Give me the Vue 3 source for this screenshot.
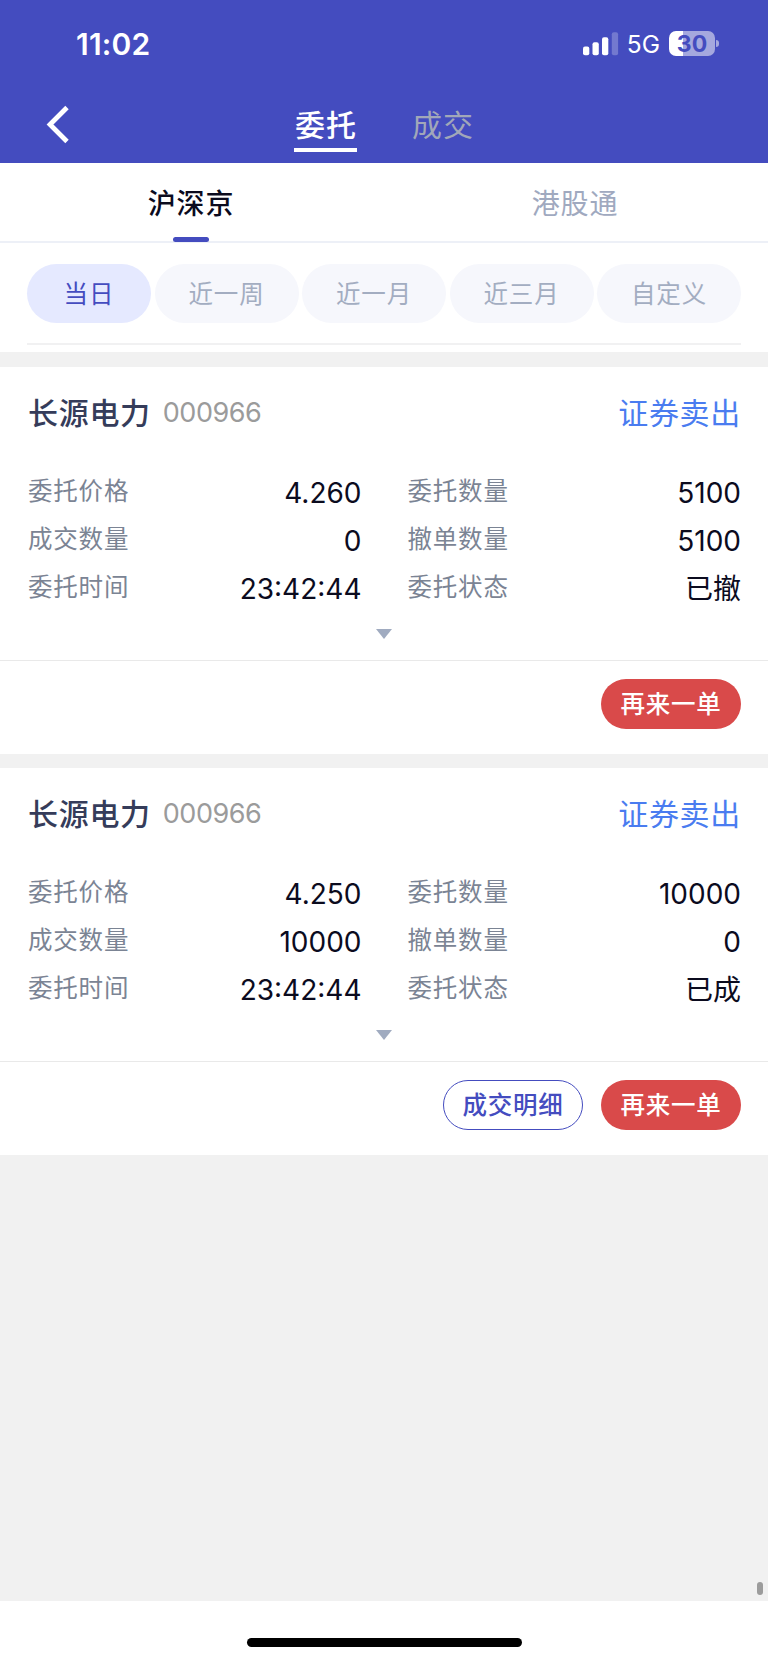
<script setup>
import { ref } from 'vue'

const pageTab = ref('委托')
const pageTabs = ['委托', '成交']

const market = ref('沪深京')
const markets = ['沪深京', '港股通']

const range = ref('当日')
const ranges = ['当日', '近一周', '近一月', '近三月', '自定义']

const orders = [
  {
    id: 1,
    name: '长源电力',
    code: '000966',
    type: '证券卖出',
    fields: [
      { label: '委托价格', value: '4.260' },
      { label: '委托数量', value: '5100' },
      { label: '成交数量', value: '0' },
      { label: '撤单数量', value: '5100' },
      { label: '委托时间', value: '23:42:44' },
      { label: '委托状态', value: '已撤' }
    ],
    hasDetail: false
  },
  {
    id: 2,
    name: '长源电力',
    code: '000966',
    type: '证券卖出',
    fields: [
      { label: '委托价格', value: '4.250' },
      { label: '委托数量', value: '10000' },
      { label: '成交数量', value: '10000' },
      { label: '撤单数量', value: '0' },
      { label: '委托时间', value: '23:42:44' },
      { label: '委托状态', value: '已成' }
    ],
    hasDetail: true
  }
]
</script>

<template>
  <div class="page">
    <header class="header">
      <div class="status">
        <span class="time">11:02</span>
        <div class="status-right">
          <svg class="signal" width="36" height="24" viewBox="0 0 36 24">
            <rect x="0" y="14.5" width="6.3" height="8.7" rx="2" fill="#fff" />
            <rect x="9.5" y="10.3" width="6.3" height="12.9" rx="2" fill="#fff" />
            <rect x="19" y="5.3" width="6.3" height="17.9" rx="2" fill="#fff" />
            <rect x="28.8" y="0.3" width="6.3" height="22.9" rx="2" fill="#fff" opacity="0.25" />
          </svg>
          <span class="network">5G</span>
          <div class="battery">
            <span class="battery-body">30</span>
            <span class="battery-tip"></span>
          </div>
        </div>
      </div>
      <nav class="nav">
        <svg class="back" width="24" height="40" viewBox="0 0 24 40">
          <path d="M21 2.5 L4 19.5 L21 36.5" fill="none" stroke="#fff" stroke-width="4.8" />
        </svg>
        <div class="page-tabs">
          <span
            v-for="tab of pageTabs"
            :key="tab"
            class="page-tab"
            :class="{ active: tab === pageTab }"
            @click="pageTab = tab"
          >{{ tab }}</span>
        </div>
      </nav>
    </header>

    <div class="markets">
      <div
        v-for="item of markets"
        :key="item"
        class="market"
        :class="{ active: item === market }"
        @click="market = item"
      >
        <span>{{ item }}</span>
      </div>
    </div>

    <div class="filter">
      <div class="ranges">
        <button
          v-for="item of ranges"
          :key="item"
          class="range"
          :class="{ active: item === range }"
          @click="range = item"
        >{{ item }}</button>
      </div>
    </div>

    <main class="orders">
      <section v-for="order of orders" :key="order.id" class="order">
        <div class="order-title">
          <span class="name">{{ order.name }}</span>
          <span class="code">{{ order.code }}</span>
          <span class="type">{{ order.type }}</span>
        </div>
        <div class="fields">
          <div v-for="field of order.fields" :key="field.label" class="field">
            <span class="label">{{ field.label }}</span>
            <span class="value">{{ field.value }}</span>
          </div>
        </div>
        <div class="expand">
          <svg width="16" height="10" viewBox="0 0 16 10">
            <path d="M0 0 H16 L8 10 Z" fill="#a0abc0" />
          </svg>
        </div>
        <div class="actions">
          <button v-if="order.hasDetail" class="btn btn-outline">成交明细</button>
          <button class="btn btn-red">再来一单</button>
        </div>
      </section>
      <i class="scrollbar"></i>
    </main>

    <footer class="footer">
      <span class="home-bar"></span>
    </footer>
  </div>
</template>

<style>
body {
  margin: 0;
  background: #fff;
}
</style>

<style scoped>
.page {
  display: flex;
  flex-direction: column;
  width: 768px;
  height: 1662px;
  overflow: hidden;
  background: #fff;
  font-family: Inter, "Noto Sans CJK SC", sans-serif;
  color: #0b0b1e;
}

button {
  margin: 0;
  padding: 0;
  border: 0;
  font-family: inherit;
  cursor: pointer;
}

.header {
  height: 163px;
  flex: none;
  background: #444cbf;
  color: #fff;
}

.status {
  display: flex;
  justify-content: space-between;
  align-items: center;
  height: 87px;
  padding: 0 49px 0 76px;
}

.time {
  font-size: 30px;
  font-weight: 600;
  letter-spacing: 0.2px;
}

.status-right {
  display: flex;
  align-items: center;
}

.network {
  margin: 0 9px 0 8px;
  font-size: 24.5px;
  font-weight: 400;
}

.battery {
  display: flex;
  align-items: center;
  gap: 1px;
}

.battery-body {
  width: 46px;
  height: 25px;
  border-radius: 7px;
  background: linear-gradient(to right, #fff 14.5px, #a5a8de 14.5px);
  color: #444cbf;
  font-size: 23px;
  font-weight: 700;
  line-height: 26px;
  text-align: center;
}

.battery-tip {
  width: 3px;
  height: 7px;
  border-radius: 0 4px 4px 0;
  background: #a5a8de;
}

.nav {
  display: flex;
  height: 76px;
}

.back {
  margin: 18px 0 0 46px;
}

.page-tabs {
  display: flex;
  gap: 54px;
  margin-left: 224px;
}

.page-tab {
  box-sizing: border-box;
  height: 65px;
  padding-left: 1px;
  font-size: 30px;
  line-height: 76px;
  letter-spacing: 1px;
  color: #a1a7b9;
}

.page-tab.active {
  border-bottom: 4px solid #fff;
  color: #fff;
  font-weight: 500;
}

.markets {
  display: flex;
  flex: none;
  box-sizing: border-box;
  height: 80px;
  border-bottom: 2px solid #edf0f7;
}

.market {
  position: relative;
  flex: 1;
  padding-right: 2px;
  font-size: 28px;
  line-height: 82px;
  letter-spacing: 0.8px;
  text-align: center;
  color: #a0a9bf;
}

.market.active {
  color: #0b0b1e;
  font-weight: 500;
}

.market.active::after {
  content: "";
  position: absolute;
  left: 50%;
  bottom: -1px;
  width: 36px;
  height: 5px;
  margin-left: -19px;
  border-radius: 3px;
  background: #444cbf;
}

.filter {
  flex: none;
  box-sizing: border-box;
  height: 109px;
  padding: 21px 27px 0;
}

.ranges {
  display: flex;
  gap: 3.5px;
  height: 79px;
  border-bottom: 2px solid #f1f1f2;
}

.range {
  flex: 1;
  height: 59px;
  border-radius: 30px;
  background: #f6f7fc;
  color: #a3adc1;
  font-size: 24.5px;
  line-height: 61px;
  letter-spacing: 0.9px;
}

.range.active {
  flex: 0 0 124px;
  background: #e5e9ff;
  color: #444cbf;
}

.orders {
  position: relative;
  flex: 1;
  display: flex;
  flex-direction: column;
  gap: 14px;
  padding-top: 15px;
  background: #f1f1f1;
}

.order {
  display: flex;
  flex-direction: column;
  height: 387px;
  background: #fff;
}

.order-title {
  display: flex;
  align-items: center;
  height: 88px;
  padding: 0 27px 0 28px;
  font-size: 30px;
  letter-spacing: 0.7px;
}

.name {
  color: #353c5a;
  font-weight: 500;
}

.code {
  margin-left: 12px;
  padding-top: 3px;
  color: #9b9b9b;
  font-size: 27px;
  letter-spacing: -0.5px;
}

.type {
  margin-left: auto;
  color: #4a7cf0;
}

.fields {
  display: grid;
  grid-template-columns: 1fr 1fr;
  grid-auto-rows: 48px;
  column-gap: 46px;
  padding: 11px 27px 0 28px;
}

.field {
  display: flex;
  justify-content: space-between;
}

.label {
  color: #7b8494;
  font-size: 24.5px;
  line-height: 50px;
  letter-spacing: 0.8px;
}

.value {
  font-size: 28px;
  line-height: 54px;
}

.expand {
  display: flex;
  justify-content: center;
  height: 31px;
  padding-top: 19px;
  border-bottom: 1px solid #e9e9e9;
}

.actions {
  display: flex;
  justify-content: flex-end;
  gap: 18px;
  padding: 18px 27px 0;
}

.btn {
  box-sizing: border-box;
  width: 140px;
  height: 50px;
  padding-bottom: 3px;
  border-radius: 25px;
  font-size: 24.5px;
  font-weight: 500;
  letter-spacing: 0.8px;
}

.btn-outline {
  border: 1px solid #444cbf;
  background: #fff;
  color: #444cbf;
}

.btn-red {
  background: #d94a4a;
  color: #fff;
}

.scrollbar {
  position: absolute;
  right: 5px;
  bottom: 6px;
  width: 6px;
  height: 13px;
  border-radius: 3px;
  background: #9c9c9c;
}

.footer {
  display: flex;
  flex: none;
  justify-content: center;
  height: 61px;
}

.home-bar {
  width: 275px;
  height: 9px;
  margin-top: 37px;
  border-radius: 5px;
  background: #000;
}
</style>
